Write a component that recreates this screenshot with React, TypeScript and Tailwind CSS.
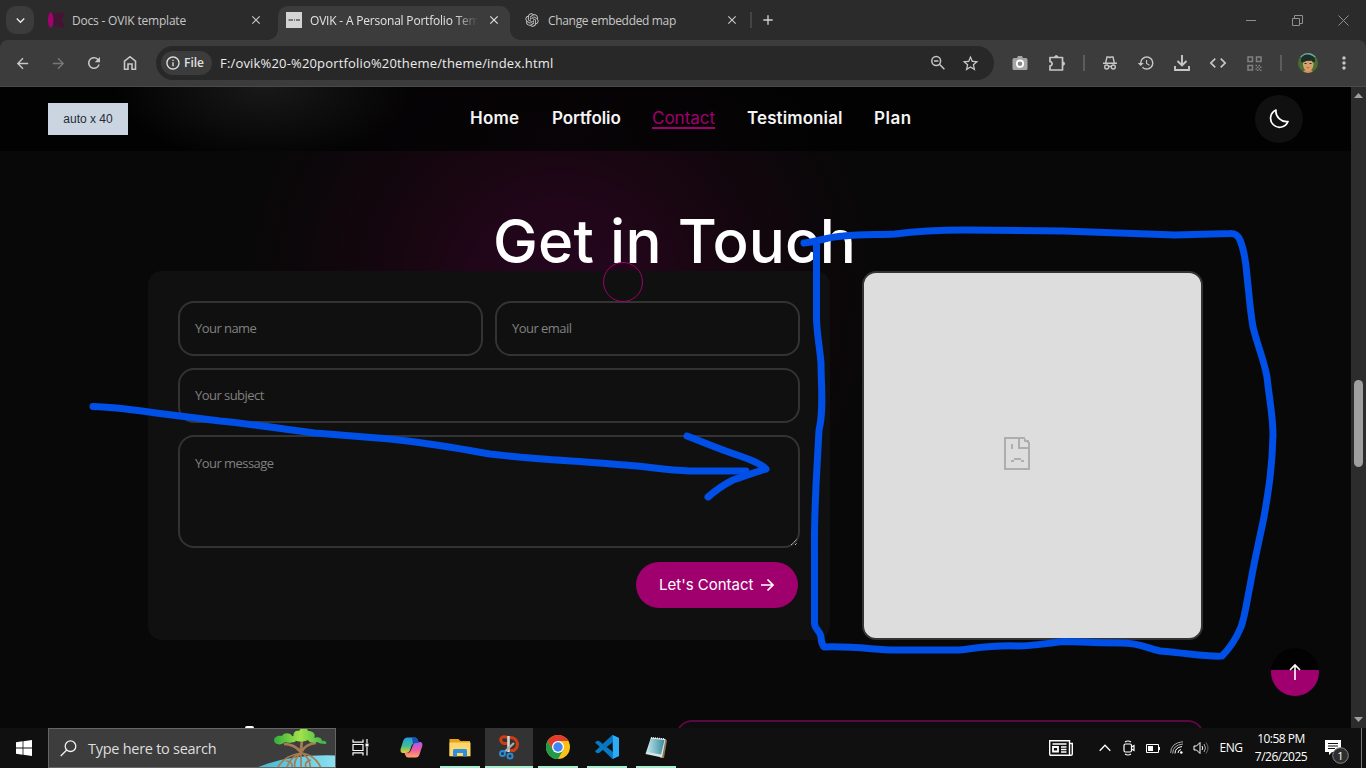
import React from "react";
import {
  MdArrowBack, MdArrowForward, MdRefresh, MdInfoOutline, MdStarBorder,
  MdHistory, MdCode, MdMoreVert, MdAdd, MdClose, MdKeyboardArrowDown,
} from "react-icons/md";
import { RiOpenaiFill } from "react-icons/ri";

const ui = "font-['Open_Sans','Noto_Sans',sans-serif]";
const display = "font-['Inter','Open_Sans',sans-serif]";

function Tabs() {
  return (
    <div className={`flex h-10 shrink-0 bg-[#2b2b2b] text-[12px] text-[#c7c7c7] ${ui}`}>
      <div className="w-10 pl-[6px] pt-[6px]">
        <div className="flex h-7 w-7 items-center justify-center rounded-[10px] bg-[#3c3c3c]">
          <MdKeyboardArrowDown size={17} color="#e8e8e8" />
        </div>
      </div>
      <div className="flex h-10 w-[238px] items-center pl-2">
        <svg width="16" height="16" viewBox="0 0 16 16">
          <ellipse cx="2.7" cy="8" rx="2.7" ry="7.8" fill="#a5006f" />
          <path d="M6 .5l1.500 14.500L9 .5M10.500 .5v15M12.500 .5v15M15.500 .5l-3 7.500 3 7.500" fill="none" stroke="#500a3b" strokeWidth="1.400" />
        </svg>
        <span className="ml-2 w-[177px] whitespace-nowrap pt-px tracking-[-0.2px]">Docs - OVIK template</span>
        <MdClose size={14} />
      </div>
      <div className="relative mt-[6px] flex h-[34px] w-[232px] items-center rounded-t-[10px] bg-[#3c3c3c] pb-[6px] pl-2 text-[#e2e2e2]">
        <span className="absolute -left-[10px] bottom-0 h-[10px] w-[10px] bg-[radial-gradient(circle_at_0_0,#2b2b2b_9.5px,#3c3c3c_10px)]" />
        <span className="absolute -right-[10px] bottom-0 h-[10px] w-[10px] bg-[radial-gradient(circle_at_100%_0,#2b2b2b_9.5px,#3c3c3c_10px)]" />
        <svg width="16" height="16" viewBox="0 0 16 16" className="shrink-0">
          <path d="M0 0h16v16H0z" fill="#d4d4d4" />
          <path d="M2.500 8h4.500M8 8h1M10 8h4" stroke="#777" strokeWidth="2" />
        </svg>
        <span className="ml-2 w-[168px] overflow-hidden whitespace-nowrap pt-px tracking-[-0.2px] [mask-image:linear-gradient(to_right,black_145px,transparent_168px)]">OVIK - A Personal Portfolio Tem</span>
        <MdClose size={14} className="ml-[9px] shrink-0" />
      </div>
      <div className="flex h-10 w-[240px] items-center pl-[14px]">
        <RiOpenaiFill size={16} />
        <span className="ml-2 w-[177px] whitespace-nowrap pt-px tracking-[-0.33px]">Change embedded map</span>
        <MdClose size={14} />
      </div>
      <div className="mt-3 h-4 w-[2px] bg-[#444]" />
      <div className="flex w-8 items-center justify-center text-[#d2d2d2]"><MdAdd size={16} /></div>
      <div className="ml-auto flex text-[#909090]">
        <div className="flex w-[46px] items-center justify-center"><svg width="11" height="11"><path d="M0 5.5h10" stroke="currentColor" /></svg></div>
        <div className="flex w-[46px] items-center justify-center"><svg width="11" height="11" fill="none" stroke="currentColor"><path d="M.5 3.5h7v7h-7zM2.5 3.5v-3h8v8h-3" /></svg></div>
        <div className="flex w-[46px] items-center justify-center"><svg width="11" height="11" stroke="currentColor"><path d="M.5.5l10 10M10.5.5l-10 10" /></svg></div>
      </div>
    </div>
  );
}

function Slot({ children }: { children: React.ReactNode }) {
  return <div className="flex w-9 shrink-0 items-center justify-center">{children}</div>;
}

function Toolbar() {
  return (
    <div className="h-[47px] shrink-0 bg-[#2b2b2b]">
      <div className={`flex h-[47px] rounded-t-[8px] border-b border-[#4a4a4a] bg-[#3c3c3c] pl-1 text-[#c7c7c7] ${ui}`}>
        <Slot><MdArrowBack size={17} /></Slot>
        <Slot><MdArrowForward size={17} color="#777" /></Slot>
        <Slot><MdRefresh size={18} /></Slot>
        <Slot>
          <svg width="14" height="16" viewBox="0 0 14 16" fill="none" stroke="currentColor" strokeWidth="1.6"><path d="M1.5 6.2 7 1.7l5.5 4.5v8H9V9H5v5.2H1.5z" /></svg>
        </Slot>
        <div className="ml-2 mt-[6px] flex h-[34px] w-[838px] items-center rounded-full bg-[#282828] pl-[5px] pr-[7px]">
          <div className="flex h-6 w-[51px] items-center rounded-full bg-[#3c3c3c] pl-[4px] text-[12px] font-semibold text-[#e0e0e0]">
            <MdInfoOutline size={16} /><span className="ml-[3px]">File</span>
          </div>
          <span className="ml-2 whitespace-nowrap pt-px text-[13px] tracking-[0.17px] text-[#ececec]">F:/ovik%20-%20portfolio%20theme/theme/index.html</span>
          <div className="ml-auto flex w-[33px] justify-center">
            <svg width="16" height="16" viewBox="0 0 16 16" fill="none" stroke="currentColor" strokeWidth="1.5"><circle cx="6.2" cy="6" r="4.4" /><path d="M9.4 9.3l5 5M4 6h4.4" /></svg>
          </div>
          <div className="flex w-[33px] justify-center"><MdStarBorder size={19} /></div>
        </div>
        <div className="w-2" />
        <Slot>
          <svg width="16" height="16" viewBox="0 0 16 16"><path d="M5 3l1-2h4l1 2h3a1.5 1.5 0 0 1 1.5 1.5v9A1.5 1.5 0 0 1 14 15H2a1.500 1.500 0 0 1-1.500-1.500v-9A1.500 1.500 0 0 1 2 3z" fill="#a6a6a6" /><circle cx="8" cy="8.700" r="3.200" fill="#888" stroke="#fff" strokeWidth="1.800" /></svg>
        </Slot>
        <div className="flex w-[37px] items-center justify-center">
          <svg width="18" height="18" viewBox="0 0 18 18" fill="none" stroke="currentColor" strokeWidth="1.7" strokeLinejoin="round"><path d="M2 3.500h12.500v12.500H2v-4.200c2.800 0 2.800-4.200 0-4.200z" /><path d="M6.700 3.200a1.600 1.600 0 0 1 3.200 0zM15 8a1.600 1.600 0 0 1 0 3.200z" fill="currentColor" strokeWidth="1" /></svg>
        </div>
        <div className="flex w-[17px] items-center justify-center"><div className="h-4 w-[2px] bg-[#5c5c5c]" /></div>
        <Slot>
          <svg width="16" height="16" viewBox="0 0 16 16" fill="none" stroke="currentColor" strokeWidth="1.4"><path d="M1 8.200h14M3.700 7.700 5 2h1.800l1.200.700L9.200 2H11l1.300 5.700" /><circle cx="4.700" cy="12" r="2" /><circle cx="11.300" cy="12" r="2" /><path d="M6.700 11.700q1.300-.8 2.600 0" /></svg>
        </Slot>
        <Slot><MdHistory size={18} /></Slot>
        <Slot>
          <svg width="18" height="18" viewBox="0 0 18 18" fill="none" stroke="currentColor" strokeWidth="1.900"><path d="M9 1v10.500M4.500 7 9 11.500 13.500 7M2 12v4h14v-4" /></svg>
        </Slot>
        <Slot><MdCode size={20} /></Slot>
        <Slot>
          <svg width="15" height="15" viewBox="0 0 15 15" fill="none" stroke="#818181" strokeWidth="1.500"><path d="M1 1h4.500v4.500H1zM9.500 1H14v4.500H9.500zM1 9.500h4.500V14H1z" /><path d="M8.500 9.500h6M8.500 13h6" strokeDasharray="1.500 1.500" /><path d="M10 11.200h5M10 14.500h5" strokeDasharray="1.500 1.500" /></svg>
        </Slot>
        <div className="flex w-[18px] items-center justify-center"><div className="h-4 w-[2px] bg-[#5c5c5c]" /></div>
        <Slot>
          <svg width="20" height="20" viewBox="0 0 20 20">
            <clipPath id="av"><circle cx="10" cy="10" r="10" /></clipPath>
            <g clipPath="url(#av)">
              <path d="M0 0h20v20H0z" fill="#47702f" />
              <path d="M0 0h20v4H0z" fill="#70a7a0" />
              <path d="M4 20l3-3h6l3 3z" fill="#d98e55" />
              <path d="M5 8h10.500v4q-1 6-5.300 6T5 12z" fill="#d6a06c" />
              <path d="M3 9C2 4 6 1 10 1.500S18 4 17 9l-2 .5-1.500-2-4.500.3-4 1.700z" fill="#1b2f2a" />
              <path d="M6.500 10.500h2M11.500 10.500h2" stroke="#3b271c" strokeWidth="1.200" />
              <path d="M8.700 14.700h2.600" stroke="#9d5a3c" strokeWidth=".8" />
            </g>
          </svg>
        </Slot>
        <Slot><MdMoreVert size={20} /></Slot>
      </div>
    </div>
  );
}

const field = "flex items-center rounded-[16px] border-2 border-[#333] pl-[15px] pt-px";

function Page() {
  return (
    <div className="flex h-[641px] shrink-0 overflow-hidden bg-[#080808]">
      <main className="relative flex w-[1351px] flex-col bg-[radial-gradient(circle_330px_at_560px_205px,#240620_0%,#210619_25%,#16060f_52%,#0c070a_80%,transparent_100%)]">
        <header className={`flex h-16 shrink-0 items-center bg-[#020202] bg-[radial-gradient(ellipse_150px_75px_at_265px_0px,#191919,transparent),radial-gradient(ellipse_320px_120px_at_560px_50px,#080407,transparent)] pl-12 pr-12 ${display}`}>
          <div className="flex h-8 w-20 items-center justify-center bg-[#cbd5e1] font-['Liberation_Sans',sans-serif] text-[12px] text-[#222b35]">auto x 40</div>
          <nav className="ml-[342px] flex items-center whitespace-nowrap text-[17px] font-semibold text-[#f4f4f4]">
            <span className="w-[82px] tracking-[0.2px]">Home</span>
            <span className="w-[100px] tracking-[-0.1px]">Portfolio</span>
            <span className="w-[95px] font-normal text-[#a0006e]"><span className="underline decoration-2 underline-offset-[3px]">Contact</span></span>
            <span className="w-[127px] tracking-[0.1px]">Testimonial</span>
            <span className="tracking-[0.5px]">Plan</span>
          </nav>
          <div className="ml-auto flex h-12 w-12 items-center justify-center rounded-full bg-[#101010]">
            <svg width="22" height="22" viewBox="0 0 22 22" fill="none" stroke="#fff" strokeWidth="1.700" strokeLinejoin="round"><path d="M8 2a9 9 0 1 0 12 11.500C13.500 14.500 7 8.500 8 2z" /></svg>
          </div>
        </header>
        <h1 className={`mt-[57px] h-[63px] whitespace-nowrap pl-[493px] text-[60px] font-medium leading-[66px] tracking-[0.15px] text-white ${display}`}>Get in Touch</h1>
        <div className="flex pl-[148px]">
          <form className={`flex h-[369px] w-[682px] flex-col gap-3 rounded-[14px] bg-[#101010] p-[30px] text-[13px] tracking-[-0.55px] text-[#808080] ${ui}`}>
            <div className="flex gap-3">
              <div className={`h-[55px] w-[305px] ${field}`}>Your name</div>
              <div className={`h-[55px] w-[305px] ${field}`}>Your email</div>
            </div>
            <div className={`h-[55px] ${field}`}>Your subject</div>
            <div className="relative h-[113px] rounded-[16px] border-2 border-[#333] pl-[15px] pt-[17px]">
              Your message
              <svg width="8" height="8" className="absolute bottom-0 right-0" stroke="#bbb" strokeDasharray="1.500 .5"><path d="M1 7 7 1M5 7l2-2" /></svg>
            </div>
            <button type="button" className={`mr-[2px] mt-[2px] flex h-[46px] w-[162px] items-center self-end rounded-full bg-[#a0006e] pl-[23px] text-[15px] tracking-[0px] text-white ${display}`}>
              <span className="w-[101px] whitespace-nowrap text-left">Let's Contact</span>
              <svg width="15" height="14" viewBox="0 0 15 14" fill="none" stroke="#fff" strokeWidth="1.700"><path d="M1 7h12M7.500 1.500 13 7l-5.500 5.500" /></svg>
            </button>
          </form>
          <div className="ml-8 flex h-[369px] w-[341px] rounded-[14px] border-2 border-[#333] bg-[#ddd] pl-[140px] pt-[164px]">
            <svg width="26" height="33" viewBox="0 0 26 33" fill="none" stroke="#aeaeae" strokeWidth="2" shapeRendering="crispEdges">
              <path d="M21 1H1v31h24V5M15 1v10h10M21 2v2h3v2" /><path d="M8 7v5" /><path d="M10 22h7M7 24h3M17 24h3" />
            </svg>
          </div>
        </div>
        <div className="mt-[80px] flex h-2 items-start overflow-hidden">
          <div className="ml-[245px] mt-[6px] h-4 w-[9px] rounded-t-[2px] bg-white" />
          <div className="ml-[422px] h-[60px] w-[528px] rounded-[16px] border-2 border-[#5a0842] bg-[#0d0d0d]" />
        </div>
        <div className="absolute left-[1271px] top-[561px] flex h-12 w-12 items-center justify-center rounded-full bg-[linear-gradient(#020202_22px,#a0006e_22px)]">
          <svg width="14" height="18" viewBox="0 0 14 18" fill="none" stroke="#fff" strokeWidth="1.600"><path d="M7 17V2M2 7l5-5 5 5" /></svg>
        </div>
      </main>
      <div className="flex w-[15px] flex-col items-center justify-between bg-[#2c2c2c] py-[6px]">
        <svg width="9" height="5"><path d="M4.500 0 9 5H0z" fill="#a0a0a0" /></svg>
        <div className="mt-[32px] h-[87px] w-[9px] rounded-full bg-[#9f9f9f]" />
        <svg width="9" height="5"><path d="M0 0h9L4.500 5z" fill="#a0a0a0" /></svg>
      </div>
    </div>
  );
}

function TaskButton({ running, active, children }: { running?: boolean; active?: boolean; children: React.ReactNode }) {
  return (
    <div className={`mr-px flex w-12 flex-col items-center ${active ? "bg-[#333]" : ""}`}>
      <div className="flex h-[38px] items-center">{children}</div>
      {running && <div className={`h-[2px] bg-[#a5efcf] ${active ? "w-12" : "w-10"}`} />}
    </div>
  );
}

function Taskbar() {
  return (
    <div className={`flex h-10 shrink-0 bg-[#101010] text-white ${ui}`}>
      <div className="flex w-12 items-center justify-center">
        <svg width="16" height="16" viewBox="0 0 16 16" fill="#fff"><path d="M0 2.200 6.600 1.300v6.300H0zM7.400 1.200 16 0v7.600H7.400zM0 8.400h6.600v6.300L0 13.800zM7.400 8.400H16V16l-8.600-1.200z" /></svg>
      </div>
      <div className="relative flex h-10 w-[288px] items-center overflow-hidden border border-[#666] bg-[#3d3d3d] pl-[11px]">
        <svg width="17" height="17" viewBox="0 0 17 17" fill="none" stroke="#f0f0f0" strokeWidth="1.300"><circle cx="10.500" cy="6.200" r="5.300" /><path d="M6.700 10 .7 16" /></svg>
        <span className="ml-[11px] whitespace-nowrap pt-px text-[14.5px] tracking-[-0.27px] text-[#dedede]">Type here to search</span>
        <svg width="80" height="40" viewBox="0 0 80 40" className="absolute -right-px -top-px">
          <defs><linearGradient id="sea"><stop stopColor="#42b7d2" /><stop offset="1" stopColor="#8be0ef" /></linearGradient><linearGradient id="leaf"><stop stopColor="#32ad39" /><stop offset=".5" stopColor="#a2e34a" /><stop offset="1" stopColor="#35b34a" /></linearGradient></defs>
          <path d="M0 40Q32 26 80 27.500V40z" fill="url(#sea)" />
          <g fill="none" stroke="#a77b52" strokeWidth="1.700"><path d="M46 12q-1 9-1 14M28 16q10 0 17 8M60 15q-10 1-14 8" strokeWidth="2.700" /><path d="M45 25q-17 3-23 14M45 25Q33 30 31 40M45 25q-8 7-6 15M45 25v15M46 25q9 6 8 15M46 25q13 2 19 15M30 33q7 0 6 7M55 32q-7 1-5 8" /></g>
          <g fill="url(#leaf)"><path d="M19 15c-3-5 2-8 7-7 2-4 9-3 10 0 4 0 5 4 3 6-5 1-8 1-10 0-3 3-7 3-10 1zM38 12c-2-7 1-10 5-9 3-5 9-3 9 0 6 0 8 4 6 7 4-2 8 0 8 3 4-1 5 2 4 3-5 0-7-1-9-2-5 2-8 0-9-2-5 2-9 2-14 0z" /></g>
        </svg>
      </div>
      <TaskButton>
        <svg width="17" height="17" viewBox="0 0 17 17" fill="none" stroke="#fff" strokeWidth="1.200"><path d="M1 .500v2.700h10V.500M1 5.500h10v6H1zM1 16.500v-2.700h10v2.700M15 0v4M15 8v8.500" /><path d="M13.500 4.500h3v3h-3z" fill="#fff" stroke="none" /></svg>
      </TaskButton>
      <div className="w-[2px]" />
      <TaskButton>
        <svg width="23" height="21" viewBox="0 0 23 21">
          <defs><linearGradient id="c1" x2="0" y2="1"><stop stopColor="#249ce8" /><stop offset=".55" stopColor="#40bd90" /><stop offset="1" stopColor="#f6c82f" /></linearGradient><linearGradient id="c2" x2="0" y2="1"><stop stopColor="#a35cf0" /><stop offset=".5" stopColor="#ee5aa5" /><stop offset="1" stopColor="#ffa660" /></linearGradient></defs>
          <path d="M7 .5h8q2 0 3 3l.8 2.500h-3.300q-3 0-4 3l-1.800 5Q8.700 16 6 16H3Q0 16 .6 12l2.700-8.500Q4.500.500 7 .500z" fill="url(#c1)" />
          <path d="M16 20.500H8q-2 0-3-3L4.500 16H7q3 0 4-3l2-5q1-3 4-3h3q3 0 2.300 4l-2.800 8.500q-1 3-3.500 3z" fill="url(#c2)" />
          <path d="M12 .500h3q2 0 3 3l.8 2.500h-3q-2 0-2.800 1.500z" fill="#1652be" />
        </svg>
      </TaskButton>
      <TaskButton running>
        <svg width="22" height="19" viewBox="0 0 22 19"><path d="M.500 1h9l2 2H21v15H.500z" fill="#e8a317" /><path d="M.500 4.500H21.500v13.800H.500z" fill="#ffd86b" /><path d="M4 18.500v-6q0-1.500 1.500-1.500h11q1.500 0 1.500 1.500v6h-4v-3.500H8v3.500z" fill="#2d8fdd" /></svg>
      </TaskButton>
      <TaskButton running active>
        <svg width="22" height="25" viewBox="0 0 22 25" fill="none"><path d="M10 2.500C4 .5 2 3 3 6s5 3 7 2M12 2.500c7 0 9 7 6 11-1.500 2-4 2.500-6 1.500" stroke="#cf3d12" strokeWidth="3" /><path d="M10.500 1v16" stroke="#d8d8d8" strokeWidth="2.600" /><path d="M16 8 7 16.500" stroke="#aaa" strokeWidth="2.300" /><circle cx="4.500" cy="18.500" r="2.500" stroke="#288bd5" strokeWidth="2" /><circle cx="12" cy="21" r="2.500" stroke="#288bd5" strokeWidth="2" /></svg>
      </TaskButton>
      <TaskButton running>
        <svg width="24" height="24" viewBox="0 0 24 24"><circle cx="12" cy="12" r="12" fill="#fbc116" /><path d="M1.600 6A12 12 0 0 1 22.400 6H12v6L6.800 15z" fill="#e33b2e" /><path d="M1.600 6A12 12 0 0 0 12 24l5.200-9L12 12 6.800 15z" fill="#229a4b" /><circle cx="12" cy="12" r="6" fill="#fff" /><circle cx="12" cy="12" r="4.700" fill="#4285f4" /></svg>
      </TaskButton>
      <TaskButton running>
        <svg width="24" height="24" viewBox="0 0 24 24"><path d="M17.500 0 24 3v18l-6.500 3L2 9.200 0 7.700l2-1.900L4 6l14 11V7L4 18l-2 .2-2-1.900z" fill="#0879c5" /><path d="M17.500 0 24 3v18l-6.500 3 .5-1.500z" fill="#2dabf4" /><path d="M17.500 0 6.800 10 10 12.500 18 6.500z" fill="#0874bd" /></svg>
      </TaskButton>
      <TaskButton running>
        <svg width="23" height="23" viewBox="0 0 23 23"><defs><linearGradient id="np"><stop stopColor="#bce5ea" /><stop offset="1" stopColor="#398a9c" /></linearGradient></defs><path d="M20 3l2 1.500L19 22l-4 0z" fill="#8c7653" /><path d="M6 1.500 20.500 3 17 21.500.500 18z" fill="#d9e4e6" /><path d="M6 2.500 19.500 4 16 18.500 2 16z" fill="url(#np)" /><path d="M6 1.700 20 3" stroke="#eee" strokeWidth="1.500" strokeDasharray="1 1" /></svg>
      </TaskButton>
      <div className="ml-auto flex">
        <div className="flex w-[44px] items-center">
          <svg width="24" height="16" viewBox="0 0 24 16" fill="none" stroke="#fff" strokeWidth="1.400"><path d="M.7.700h19.800v14.600H2Q.7 15.300.7 14zM20.500 3.500h2.800V14q0 1.300-1.300 1.300h-2" /><path d="M3.500 4h14M12 7h5.500M12 9.500h5.500M12 12h5.500" /><path d="M4 7h5v4.500H4z" strokeWidth="1.800" /></svg>
        </div>
        <div className="flex w-6 items-center justify-center"><svg width="12" height="8" fill="none" stroke="#fff" strokeWidth="1.300"><path d="M.700 6.700 6 1.300l5.300 5.400" /></svg></div>
        <div className="flex w-6 items-center justify-center"><svg width="12" height="16" viewBox="0 0 12 16" fill="none" stroke="#fff" strokeWidth="1.200"><rect x="1" y="4" width="7.500" height="8" rx="1.500" /><path d="M8.500 7l2.500-1.500v5L8.500 9M2 2q3-2 6 0M2 14q3 2 6 0" /></svg></div>
        <div className="flex w-6 items-center justify-center"><svg width="15" height="9" viewBox="0 0 15 9" fill="none" stroke="#fff"><path d="M.500.500h12v8H.500zM13.500 3v3" /><path d="M2 2h5v5H2z" fill="#fff" stroke="none" /></svg></div>
        <div className="flex w-6 items-center justify-center"><svg width="14" height="14" viewBox="0 0 14 14" fill="none" stroke="#fff"><path d="M8 12Q8 9 11 8.500M5 12.500Q5 6.500 12 5.500" /><path d="M2.700 12.500Q2.700 4 13 3M.700 12Q.500 2 13 .700" stroke="#aaa" /><circle cx="11.300" cy="11.500" r="1.300" fill="#fff" stroke="none" /></svg></div>
        <div className="flex w-6 items-center justify-center"><svg width="17" height="14" viewBox="0 0 17 14" fill="none" stroke="#fff"><path d="M1 5h2.500L7 1.500v11L3.500 9H1zM9 5q1.500 2 0 4" /><path d="M11 3q3 4 0 8" stroke="#aaa" /><path d="M13 1.500q4 5.500 0 11" stroke="#666" /></svg></div>
        <div className="flex w-[38px] items-center justify-center pr-[2px] text-[12px] tracking-[-0.4px]">ENG</div>
        <div className="flex w-[60px] flex-col items-center justify-center whitespace-nowrap text-[12px] leading-[18px] tracking-[-0.5px]"><span>10:58 PM</span><span>7/26/2025</span></div>
        <div className="flex w-[50px] items-center justify-center pl-[2px] pt-[7px]">
          <svg width="26" height="26" viewBox="0 0 26 26"><path d="M1 1h16v12H8l-3 3v-3H1z" fill="#fff" /><path d="M4 4.500h10M4 7h10M4 9.500h7" stroke="#111" /><circle cx="16.500" cy="16.500" r="7.800" fill="#2e2e2e" stroke="#888" /><text x="16.500" y="20.500" fill="#fff" fontSize="11" textAnchor="middle" fontFamily="Open Sans">1</text></svg>
        </div>
        <div className="w-[5px] border-l border-[#777]" />
      </div>
    </div>
  );
}

export default function App() {
  return (
    <div className="relative flex h-[768px] w-[1366px] flex-col overflow-hidden bg-black">
      <Tabs />
      <Toolbar />
      <Page />
      <Taskbar />
      <svg width="1366" height="768" viewBox="0 0 1366 768" className="pointer-events-none absolute left-0 top-0" fill="none">
        <circle cx="623" cy="282" r="19.500" stroke="#a0006e" />
        <g stroke="#004fe6" strokeWidth="7" strokeLinecap="round" strokeLinejoin="round">
          <path d="M93 406.500C118 407 140 411 172 415L220 421C260 425 290 430 315 433L390 439C430 443 455 448 490 454C530 459 580 461 625 465C650 467 666 470 690 471H746" />
          <path d="M687 436C705 443 721 450 740 456C751 460 762 464 766 469C758 471 748 475 733 480C723 485 716 490 708 497" />
          <path d="M804 243C820 241 828 237 843 236C863 234 880 235 895 234C925 230 945 230 965 230L1063 231L1175 235L1230 233.500Q1237 233 1240 240C1245 252 1246 263 1247 276C1249 293 1250 310 1253 327C1257 344 1264 360 1267 377C1269 397 1273 416 1273 435C1272 472 1268 493 1264 517C1260 537 1254 562 1250 586C1247 600 1245 616 1241 627C1236 639 1228 650 1222 656C1207 657 1194 654 1160 651C1146 648 1141 643 1121 643C1100 643 1079 642 1065 641.500C1047 643 1035 646 1018 646C990 645 978 648 959 650H895C876 650 856 646 824 647Q821 643 821 637C820 630 815 630 814.500 624V548C814 507 817 470 819 430C824 410 821 385 821 363C820 350 817 335 816.500 319V244" />
        </g>
      </svg>
    </div>
  );
}
